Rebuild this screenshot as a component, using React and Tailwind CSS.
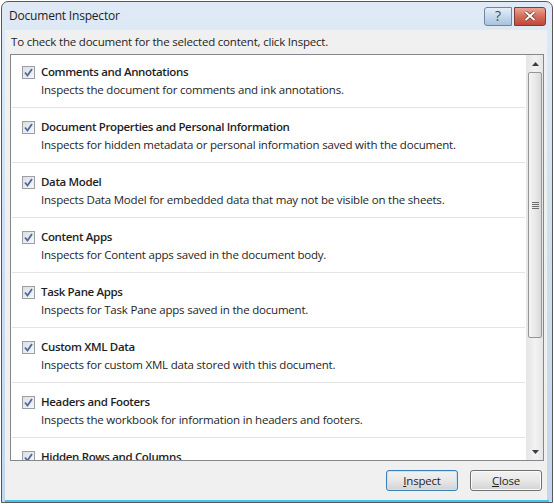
import React from "react";

const items = [
  ["Comments and Annotations", "Inspects the document for comments and ink annotations."],
  ["Document Properties and Personal Information", "Inspects for hidden metadata or personal information saved with the document."],
  ["Data Model", "Inspects Data Model for embedded data that may not be visible on the sheets."],
  ["Content Apps", "Inspects for Content apps saved in the document body."],
  ["Task Pane Apps", "Inspects for Task Pane apps saved in the document."],
  ["Custom XML Data", "Inspects for custom XML data stored with this document."],
  ["Headers and Footers", "Inspects the workbook for information in headers and footers."],
  ["Hidden Rows and Columns", "Inspects the workbook for hidden rows and columns."],
];

const CheckBox = () => (
  <div className="w-[13px] h-[13px] shrink-0 border border-[#9a9fa6] bg-gradient-to-br from-[#dcdfe3] to-[#f6f7f8] flex items-center justify-center">
    <svg width="9" height="9" viewBox="0 0 9 9">
      <path d="M1 4.5 L3.5 7.5 L8 1" fill="none" stroke="#5068a0" strokeWidth="1.8" />
    </svg>
  </div>
);

const Item = ({ title, desc }) => (
  <div className="h-[55px] shrink-0 mx-[1px] border-b border-[#e3e3e3] pt-[11px] pl-[10px]">
    <div className="flex items-center gap-[6px] h-[16px]">
      <CheckBox />
      <span className="font-semibold text-[#1e1e1e] leading-[16px] tracking-[-0.35px]">{title}</span>
    </div>
    <div className="pl-[19px] mt-[2px] leading-[16px] text-[#1e1e1e]">{desc}</div>
  </div>
);

const Arrow = ({ up }) => (
  <div className="h-[17px] flex items-center justify-center">
    <svg width="7" height="4" viewBox="0 0 7 4">
      <path d={up ? "M0 4 L3.5 0 L7 4 Z" : "M0 0 L3.5 4 L7 0 Z"} fill="#3c3c3c" />
    </svg>
  </div>
);

const Scrollbar = () => (
  <div className="w-[17px] shrink-0 bg-gradient-to-r from-[#e6e6e6] via-[#f2f2f2] to-[#e6e6e6] border-l border-[#e8e8e8] flex flex-col">
    <Arrow up />
    <div className="h-[266px] mx-[1px] rounded-[2px] border border-[#969696] bg-gradient-to-r from-[#f4f4f4] via-[#e9e9e9] to-[#d9d9d9] flex items-center justify-center">
      <div className="flex flex-col gap-[1px]">
        <div className="w-[7px] h-[1px] bg-[#6e6e6e]" />
        <div className="w-[7px] h-[1px] bg-[#6e6e6e]" />
        <div className="w-[7px] h-[1px] bg-[#6e6e6e]" />
        <div className="w-[7px] h-[1px] bg-[#6e6e6e]" />
      </div>
    </div>
    <div className="flex-1" />
    <Arrow />
  </div>
);

const Button = ({ children, def }) => (
  <button
    className={
      "w-[72px] h-[21px] rounded-[3px] border text-[#1e1e1e] leading-[19px] bg-gradient-to-b from-[#f2f2f2] via-[#e8e8e8] to-[#d2d2d2] " +
      (def ? "border-[#3c7fb1] shadow-[inset_0_0_0_1px_#c5e6f8]" : "border-[#707070] shadow-[inset_0_0_0_1px_#fbfbfb]")
    }
  >
    {children}
  </button>
);

export default function App() {
  return (
    <div
      className="w-[554px] h-[504px] bg-white p-[1px] text-[11.5px] tracking-[-0.2px]"
      style={{ fontFamily: '"Open Sans", "Noto Sans", sans-serif' }}
    >
      <div className="h-full rounded-t-[7px] border border-[#585858] bg-gradient-to-b from-[#dfeaf6] via-[#cfdff0] to-[#c3d7ec] flex flex-col">
        <div className="h-[28px] shrink-0 flex items-center pl-[7px] pr-[6px]">
          <span className="text-[#1e1e1e] flex-1 text-[12px]">Document Inspector</span>
          <div className="w-[28px] h-[19px] rounded-l-[3px] border border-[#6d86a3] bg-gradient-to-b from-[#e4eef8] via-[#c7d9ec] to-[#a9c2dd] flex items-center justify-center text-[#3a4a60] text-[14px] leading-none">
            ?
          </div>
          <div className="w-[32px] h-[19px] ml-[2px] rounded-r-[3px] border border-[#7d3b33] bg-gradient-to-b from-[#eaa596] via-[#d46c5b] to-[#c2463a] flex items-center justify-center">
            <svg width="12" height="10" viewBox="0 0 12 10">
              <path d="M1.5 1 L10.5 9 M10.5 1 L1.5 9" stroke="#5a2a24" strokeWidth="3.2" />
              <path d="M1.5 1 L10.5 9 M10.5 1 L1.5 9" stroke="#ffffff" strokeWidth="2" />
            </svg>
          </div>
        </div>
        <div className="flex-1 ml-[3px] mr-[5px] bg-[#f0f0f0] flex flex-col min-h-0">
          <div className="pt-[4px] pl-[6px] leading-[16px] text-[#1e1e1e]">
            To check the document for the selected content, click Inspect.
          </div>
          <div className="mt-[4px] ml-[5px] w-[534px] h-[407px] border border-[#828790] bg-white flex overflow-hidden">
            <div className="flex-1 flex flex-col overflow-hidden mt-[-2px]">
              {items.map(([t, d]) => (
                <Item key={t} title={t} desc={d} />
              ))}
            </div>
            <Scrollbar />
          </div>
          <div className="flex justify-end gap-[12px] mt-[9px] mr-[5px]">
            <Button def>
              <span className="underline">I</span>nspect
            </Button>
            <Button>
              <span className="underline">C</span>lose
            </Button>
          </div>
        </div>
        <div className="h-[2px] mx-[3px] bg-[#45c3ea]" />
      </div>
    </div>
  );
}
